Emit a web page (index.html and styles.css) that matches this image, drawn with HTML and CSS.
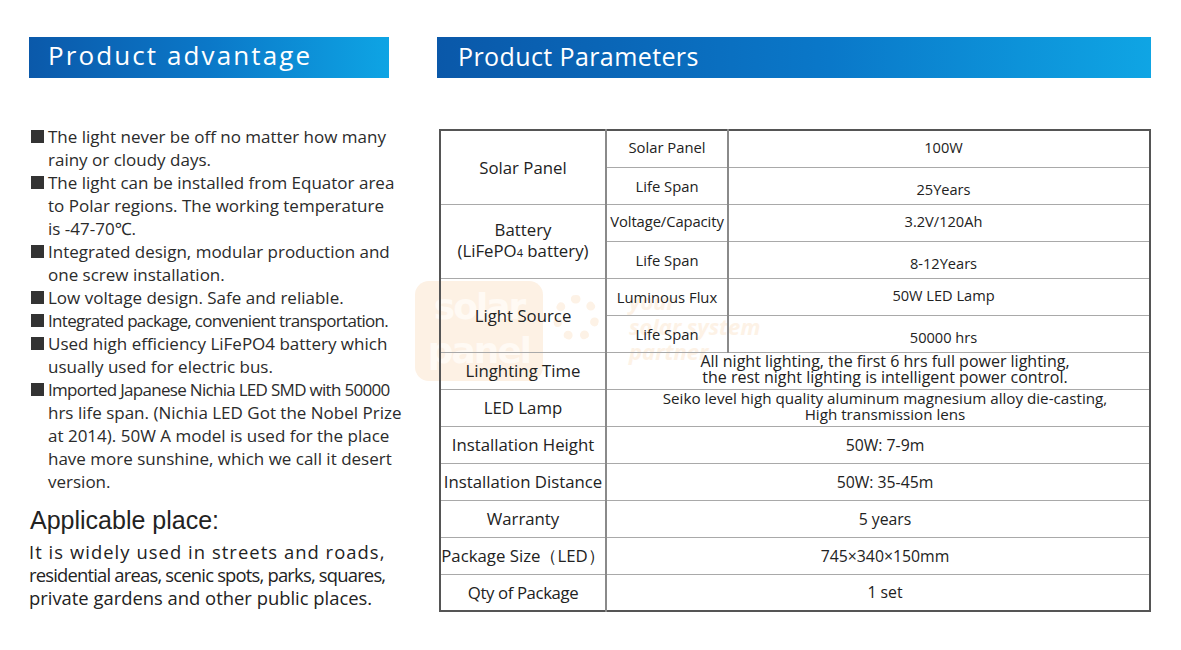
FILE: index.html
```html
<!DOCTYPE html>
<html>
<head>
<meta charset="utf-8">
<link rel="stylesheet" href="styles.css">
</head>
<body>
<div class="page">
  <section class="left">
    <h2 class="bar bar-left">Product advantage</h2>
    <ul class="adv">
      <li><span class="sq"></span><span>The light never be off no matter how many<br>rainy or cloudy days.</span></li>
      <li><span class="sq"></span><span>The light can be installed from Equator area<br>to Polar regions. The working temperature<br>is -47-70℃.</span></li>
      <li><span class="sq"></span><span>Integrated design, modular production and<br>one screw installation.</span></li>
      <li><span class="sq"></span><span>Low voltage design. Safe and reliable.</span></li>
      <li><span class="sq"></span><span class="tight">Integrated package, convenient transportation.</span></li>
      <li><span class="sq"></span><span>Used high efficiency LiFePO4 battery which<br>usually used for electric bus.</span></li>
      <li><span class="sq"></span><span><span class="tight">Imported Japanese Nichia LED SMD with 50000</span><br>hrs life span. (Nichia LED Got the Nobel Prize<br>at 2014). 50W A model is used for the place<br>have more sunshine, which we call it desert<br>version.</span></li>
    </ul>
    <h3 class="app-title">Applicable place:</h3>
    <p class="app-text"><span class="wide">It is widely used in streets and roads,</span><br><span class="tight2">residential areas, scenic spots, parks, squares,</span><br>private gardens and other public places.</p>
  </section>
  <section class="right">
    <h2 class="bar bar-right">Product Parameters</h2>
    <div class="table-wrap">
      <div class="watermark" aria-hidden="true">
        <div class="wm-logo">solar<br>panel</div>
        <div class="wm-sun"></div>
        <div class="wm-tag">your<br>solar system<br>partner</div>
      </div>
      <table class="params">
        <colgroup><col class="c1"><col class="c2"><col class="c3"></colgroup>
        <tr><td rowspan="2" class="k">Solar Panel</td><td class="s up">Solar Panel</td><td class="v up">100W</td></tr>
        <tr><td class="s">Life Span</td><td class="v low">25Years</td></tr>
        <tr><td rowspan="2" class="k">Battery<br>(LiFePO<small>4</small> battery)</td><td class="s nopad up">Voltage/Capacity</td><td class="v up">3.2V/120Ah</td></tr>
        <tr><td class="s">Life Span</td><td class="v low">8-12Years</td></tr>
        <tr><td rowspan="2" class="k">Light Source</td><td class="s">Luminous Flux</td><td class="v up">50W LED Lamp</td></tr>
        <tr><td class="s">Life Span</td><td class="v low">50000 hrs</td></tr>
        <tr><td class="k">Linghting Time</td><td colspan="2" class="v span two">All night lighting, the first 6 hrs full power lighting,<br>the rest night lighting is intelligent power control.</td></tr>
        <tr><td class="k">LED Lamp</td><td colspan="2" class="v span two two-b">Seiko level high quality aluminum magnesium alloy die-casting,<br>High transmission lens</td></tr>
        <tr><td class="k">Installation Height</td><td colspan="2" class="v span big">50W: 7-9m</td></tr>
        <tr><td class="k">Installation Distance</td><td colspan="2" class="v span big">50W: 35-45m</td></tr>
        <tr><td class="k">Warranty</td><td colspan="2" class="v span big">5 years</td></tr>
        <tr><td class="k">Package Size（LED）</td><td colspan="2" class="v span big">745×340×150mm</td></tr>
        <tr><td class="k qty">Qty of Package</td><td colspan="2" class="v span big">1 set</td></tr>
      </table>
    </div>
  </section>
</div>
</body>
</html>
```
FILE: styles.css
```css
html, body {
  margin: 0;
  padding: 0;
  background: #ffffff;
}
body {
  font-family: "Open Sans", "Noto Sans", "DejaVu Sans", sans-serif;
  color: #2a2a2a;
}
.page {
  display: flex;
  align-items: flex-start;
  padding: 37px 0 0 29px;
  width: 1181px;
  height: 650px;
  box-sizing: border-box;
  overflow: hidden;
}
.left {
  width: 360px;
  flex: none;
}
.right {
  width: 714px;
  margin-left: 48px;
  flex: none;
}
.bar {
  margin: 0;
  height: 41px;
  color: #ffffff;
  font-weight: normal;
  display: flex;
  align-items: center;
  box-sizing: border-box;
  padding-bottom: 5px;
  white-space: nowrap;
}
.bar-left {
  padding-left: 19px;
  font-size: 26px;
  letter-spacing: 2.1px;
  background: linear-gradient(90deg, #0b59aa 0%, #0b78c8 50%, #0ea4e4 100%);
}
.bar-right {
  padding-left: 21px;
  font-size: 25px;
  letter-spacing: 0.4px;
  padding-bottom: 3px;
  background: linear-gradient(90deg, #0a58a9 0%, #0a78c9 55%, #0fa5e4 100%);
}
.adv {
  list-style: none;
  margin: 47px 0 0 0;
  padding: 0;
  width: 380px;
  font-size: 17px;
  line-height: 23px;
  color: #2b2b2b;
  white-space: nowrap;
}
.adv li {
  display: flex;
  align-items: flex-start;
}
.sq {
  flex: none;
  width: 13px;
  height: 13px;
  background: #333333;
  margin: 5px 4px 0 2px;
}
.tight {
  letter-spacing: -0.7px;
}
.wide {
  letter-spacing: 1.05px;
}
.tight2 {
  letter-spacing: -0.8px;
}
.app-title {
  margin: 13px 0 0 1px;
  font-family: "Liberation Sans", Arial, sans-serif;
  font-weight: normal;
  font-size: 25px;
  line-height: 29px;
  color: #222222;
}
.app-text {
  margin: 5px 0 0 0;
  width: 380px;
  font-size: 18.4px;
  line-height: 23px;
  color: #222222;
  white-space: nowrap;
}
.table-wrap {
  position: relative;
  margin-top: 51px;
  margin-left: 2px;
}
.watermark {
  position: absolute;
  left: -24px;
  top: 152px;
  width: 370px;
  height: 104px;
  pointer-events: none;
}
.wm-logo {
  position: absolute;
  left: 0;
  top: 0;
  width: 128px;
  height: 100px;
  border-radius: 14px;
  background: #fdf1e4;
  color: #fffaf4;
  font-family: "DejaVu Sans", sans-serif;
  font-weight: bold;
  font-size: 36px;
  line-height: 44px;
  letter-spacing: -2px;
  text-align: center;
  padding-top: 4px;
  box-sizing: border-box;
}
.wm-sun {
  position: absolute;
  left: 138px;
  top: 14px;
  width: 46px;
  height: 46px;
  border-radius: 50%;
  border: 9px dotted #fdf2e6;
  box-sizing: border-box;
}
.wm-tag {
  position: absolute;
  left: 214px;
  top: 8px;
  font-style: italic;
  font-weight: bold;
  font-size: 22px;
  line-height: 25px;
  color: #fdf2e6;
}
.params {
  position: relative;
  width: 712px;
  border-collapse: collapse;
  table-layout: fixed;
  border: 2px solid #555555;
  background: transparent;
}
.c1 { width: 166px; }
.c2 { width: 122px; }
.c3 { width: auto; }
.params td {
  height: 37px;
  box-sizing: border-box;
  padding: 0;
  border: 1px solid #a9a9a9;
  text-align: center;
  vertical-align: middle;
  color: #222222;
  white-space: nowrap;
}
.params td.k {
  border-right: 2px solid #8a8a8a;
  font-size: 16.8px;
  line-height: 21px;
}
.params td.qty {
  letter-spacing: -0.4px;
}
.params td.s {
  border-right: 2px solid #8a8a8a;
  font-size: 14.8px;
  line-height: 18px;
}
.params td.nopad {
  letter-spacing: -0.1px;
}
.params td.v {
  font-size: 14.6px;
  line-height: 18px;
  padding-left: 9px;
}
.params td.span {
  padding-left: 14px;
}
.params td.up {
  padding-bottom: 3px;
}
.params td.big {
  font-size: 15.8px;
}
.params td.low {
  padding-top: 6px;
}
.params td.two {
  font-size: 16px;
  line-height: 16px;
  padding-bottom: 3px;
}
.params td.two-b {
  font-size: 15.2px;
}
.params small {
  font-size: 11px;
}
```
